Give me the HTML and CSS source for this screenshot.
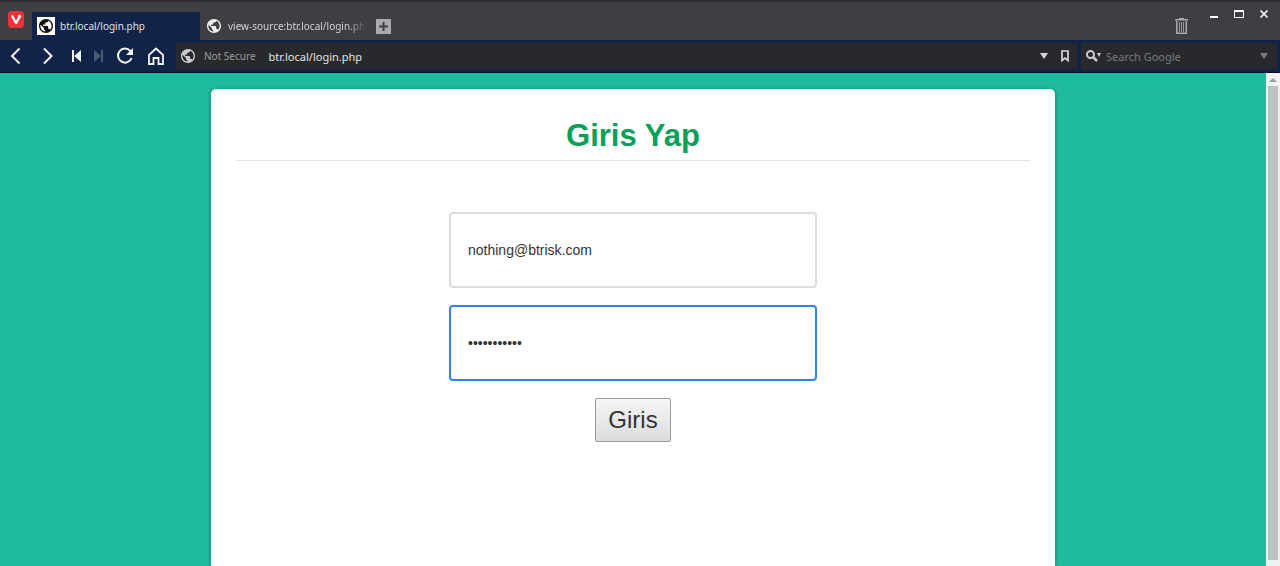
FILE: index.html
```html
<!DOCTYPE html>
<html lang="tr">
<head>
<meta charset="utf-8">
<title>btr.local/login.php</title>
<link rel="stylesheet" href="styles.css">
</head>
<body>
<svg class="defs" aria-hidden="true">
  <symbol id="globe" viewBox="2 2 20 20">
    <path fill="currentColor" d="M12 2C6.48 2 2 6.480 2 12s4.480 10 10 10 10-4.480 10-10S17.520 2 12 2zm-1 17.930c-3.950-.49-7-3.850-7-7.930 0-.62.08-1.210.21-1.790L9 15v1c0 1.100.9 2 2 2v1.930zm6.900-2.540c-.26-.81-1-1.390-1.900-1.390h-1v-3c0-.55-.45-1-1-1H8v-2h2c.55 0 1-.45 1-1V7h2c1.100 0 2-.9 2-2v-.41c2.930 1.190 5 4.060 5 7.410 0 2.080-.8 3.970-2.100 5.390z"/>
  </symbol>
</svg>
<div class="browser">
  <header class="tabbar">
    <button class="logo" aria-label="Vivaldi">
      <svg width="16" height="17" viewBox="0 0 16 17"><rect width="16" height="17" rx="4" fill="#ee3338"/><path d="M4.3 5.2 7.5 11.3Q8 12.3 8.6 11.3L10.8 7" fill="none" stroke="#fff" stroke-width="2.3" stroke-linecap="round"/><circle cx="11.5" cy="5.4" r="1.7" fill="#fff"/></svg>
    </button>
    <nav class="tabs">
      <a class="tab active" href="#"><span class="favicon"><svg width="14" height="14"><use href="#globe"/></svg></span><span class="tab-title">btr.local/login.php</span></a>
      <a class="tab" href="#"><span class="favicon"><svg width="14" height="14"><use href="#globe"/></svg></span><span class="tab-title">view-source:btr.local/login.php</span></a>
    </nav>
    <button class="new-tab" aria-label="New tab"><svg width="15" height="15"><path fill="#a9aaab" d="M0 0h15v15H0z"/><path d="M7.5 3v9M3 7.5h9" stroke="#3d3e42" stroke-width="2"/></svg></button>
    <button class="trash" aria-label="Closed tabs"><svg width="13" height="16"><path fill="#a9aaab" d="M0 1h4V0h5v1h4v1.500H0z"/><path d="M1.750 3v12.250h9.500V3" fill="none" stroke="#a9aaab" stroke-width="1.500"/><path d="M4.500 4v10M6.500 4v10M8.500 4v10" stroke="#96979a"/></svg></button>
    <div class="window-controls">
      <button aria-label="Minimize"><svg width="10" height="10"><path fill="#fff" d="M1 7h8v2H1z"/></svg></button>
      <button aria-label="Maximize"><svg width="10" height="10"><path fill="#fff" fill-rule="evenodd" d="M0 1h10v8H0zM1 3v5h8V3z"/></svg></button>
      <button aria-label="Close"><svg width="10" height="10"><path d="M1.500 1.500l7 7M8.500 1.500l-7 7" stroke="#fff" stroke-width="1.600"/></svg></button>
    </div>
  </header>
  <div class="toolbar">
    <div class="nav-buttons">
      <button aria-label="Back"><svg width="18" height="18"><path d="M12.500 1.500 5 9l7.500 7.500" fill="none" stroke="currentColor" stroke-width="2"/></svg></button>
      <button aria-label="Forward"><svg width="18" height="18"><path d="M5 1.500 12.500 9 5 16.500" fill="none" stroke="currentColor" stroke-width="2"/></svg></button>
    </div>
    <div class="skip-buttons">
      <button aria-label="Rewind"><svg width="10" height="12"><path fill="currentColor" d="M1 0h2v12H1zM10 0v12L3 6z"/></svg></button>
      <button class="dim" aria-label="Fast forward"><svg width="10" height="12"><path fill="currentColor" d="M9 0H7v12h2zM0 0v12l7-6z"/></svg></button>
    </div>
    <div class="page-buttons">
      <button aria-label="Reload"><svg width="18" height="18"><path d="M14.300 4A7 7 0 1 0 15.600 11" fill="none" stroke="currentColor" stroke-width="2"/><path fill="currentColor" d="M17 1v7h-7z"/></svg></button>
      <button aria-label="Home"><svg width="18" height="18"><path d="M2 17V8l7-6.500L16 8v9h-4.500v-6h-5v6z" fill="none" stroke="currentColor" stroke-width="1.800"/></svg></button>
    </div>
    <div class="field address">
      <svg class="site-icon" width="14" height="14"><use href="#globe"/></svg>
      <span class="security">Not Secure</span>
      <input class="url" type="text" aria-label="Address" value="btr.local/login.php">
      <button aria-label="History"><svg width="8" height="6"><path fill="#d6d7d8" d="M0 0h8L4 6z"/></svg></button>
      <button aria-label="Bookmark"><svg width="8" height="12"><path d="M1 1h6v9.500L4 8l-3 2.500z" fill="none" stroke="#d6d7d8" stroke-width="1.700"/></svg></button>
    </div>
    <div class="field search">
      <button aria-label="Search engine"><svg width="16" height="12"><circle cx="4.500" cy="4.500" r="3.500" fill="none" stroke="#c9cacb" stroke-width="2"/><path d="M7 7l4 4" stroke="#c9cacb" stroke-width="2.500"/><path fill="#c9cacb" d="M11 3h4l-2 4z"/></svg></button>
      <input class="query" type="text" aria-label="Search" placeholder="Search Google">
      <button aria-label="Search history"><svg width="8" height="6"><path fill="#77797c" d="M0 0h8L4 6z"/></svg></button>
    </div>
  </div>
  <div class="viewport">
    <main class="page">
      <section class="card">
        <h1 class="title">Giris Yap</h1>
        <form class="login">
          <input class="entry" type="email" aria-label="E-mail" value="nothing@btrisk.com">
          <input class="entry focused" type="password" aria-label="Password" value="password123">
          <button class="submit" type="button">Giris</button>
        </form>
      </section>
    </main>
    <div class="scrollbar"><svg width="8" height="4"><path fill="#9d9d9d" d="M4 0l4 4H0z"/></svg><div class="thumb"></div></div>
  </div>
</div>
</body>
</html>
```
FILE: styles.css
```css
* { box-sizing: border-box; }
body { margin: 0; font-family: "Liberation Sans", Arial, sans-serif; }
.defs { position: absolute; width: 0; height: 0; }
.browser { display: flex; flex-direction: column; height: 100vh; overflow: hidden; }
.browser svg { display: block; flex: none; }
button { padding: 0; border: 0; background: none; color: inherit; }
input { min-width: 0; outline: 0; }

.tabbar, .toolbar { font-family: "Noto Sans", sans-serif; flex: none; }
.tabbar { display: flex; align-items: flex-end; height: 40px; background: #3e3f43; border-top: 2px solid #303135; }
.logo { align-self: flex-start; width: 32px; padding: 9px 8px; }
.tabs { display: flex; }
.tab { display: flex; align-items: center; gap: 5px; width: 168px; height: 28px; padding: 0 5px; color: #d2d3d5; font-size: 10px; text-decoration: none; }
.tab:not(.active) { padding-right: 0; }
.tab.active { background: #112347; color: #dce4f2; }
.favicon { flex: none; padding: 2px; color: #eee; }
.active .favicon { padding: 1px; border: 1px solid #fff; background: #fff; color: #111; }
.tab-title { flex: 1; overflow: hidden; white-space: nowrap; }
.tab:not(.active) .tab-title { mask-image: linear-gradient(to right, #000 85%, transparent 99%); }
.new-tab { margin: 0 auto 6px 8px; }
.trash { margin: 0 21px 6px 0; }
.window-controls { display: flex; gap: 15px; align-self: flex-start; padding: 7px 11px 0 0; }

.toolbar { display: flex; align-items: center; height: 33px; padding: 0 3px 0 7px; background: #112347; border-bottom: 1px solid #0a1226; color: #f2f5fa; }
.nav-buttons { display: flex; gap: 14px; margin-right: 14px; }
.skip-buttons { display: flex; gap: 13px; margin-right: 12px; }
.page-buttons { display: flex; gap: 13px; margin-right: 11px; }
.dim { color: #4c5a76; }
.field { display: flex; align-items: center; height: 26px; background: #27292c; }
.field input { flex: 1; padding: 0; border: 0; background: none; font-family: inherit; }
.address { flex: 1; gap: 13px; padding: 0 8px 0 5px; margin-right: 4px; }
.site-icon { color: #c9cacb; margin-right: -4px; }
.security { color: #9c9ea0; font-size: 10px; }
.url { color: #e3e4e5; font-size: 11px; }
.search { width: 196px; gap: 4px; padding: 0 9px 0 5px; }
.query { font-size: 11px; }
.query::placeholder { color: #77797c; }

.viewport { display: flex; flex: 1; min-height: 0; }
.page { display: flex; flex: 1; justify-content: center; padding-top: 16px; background: #1fbb9c; overflow: hidden; }
.card { width: 66.6%; padding: 25px; border-radius: 5px 5px 0 0; background: #fff; box-shadow: 0 1px 4px rgba(0, 0, 0, .4); }
.title { margin: 0 0 51px; padding: 4px 0 6px; border-bottom: 1px solid #e2e2e2; color: #0ba05a; font-size: 31px; line-height: 36px; text-align: center; }
.login { display: flex; flex-direction: column; align-items: center; gap: 17px; }
.entry { width: 368px; max-width: 100%; height: 76px; padding: 0 17px; border: 2px solid #dcdcdc; border-radius: 4px; background: #fff; color: #333; font: 14px "Liberation Sans", Arial, sans-serif; }
.focused { border-color: #2f86e4; }
.submit { padding: 7px 12px; border: 1px solid #999; border-radius: 2px; background: linear-gradient(#f6f6f6, #dcdcdc); color: #333; font: 24px/28px "Liberation Sans", Arial, sans-serif; }
.scrollbar { display: flex; flex-direction: column; align-items: center; flex: none; width: 14px; padding: 5px 0 6px; background: #f1f1f1; gap: 4px; }
.thumb { flex: 1; width: 10px; background: #c1c1c1; }
```
